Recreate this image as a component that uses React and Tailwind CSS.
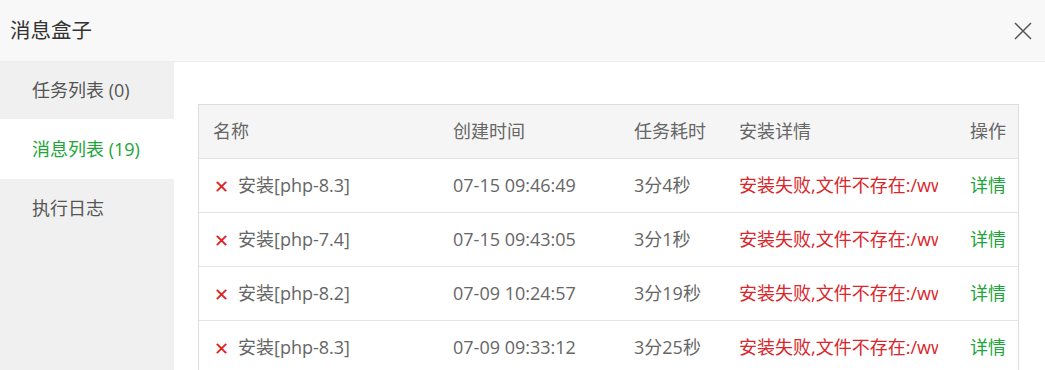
import React from "react";

const rows = [
  { name: "安装[php-8.3]", time: "07-15 09:46:49", cost: "3分4秒" },
  { name: "安装[php-7.4]", time: "07-15 09:43:05", cost: "3分1秒" },
  { name: "安装[php-8.2]", time: "07-09 10:24:57", cost: "3分19秒" },
  { name: "安装[php-8.3]", time: "07-09 09:33:12", cost: "3分25秒" },
];

export default function App() {
  return (
    <div
      className="w-[1045px] h-[370px] overflow-hidden bg-white text-[#666]"
      style={{ fontFamily: '"Open Sans", "Noto Sans CJK SC", sans-serif' }}
    >
      <div className="h-[62px] bg-[#f8f8f8] border-b border-[#eee] flex items-center justify-between pl-[10px] pr-[12px]">
        <span className="text-[20.5px] text-[#333]">消息盒子</span>
        <svg width="20" height="20" viewBox="0 0 20 20" className="text-[#555]">
          <path d="M2 2 L18 18 M18 2 L2 18" stroke="currentColor" strokeWidth="1.5" fill="none" />
        </svg>
      </div>
      <div className="flex h-[308px]">
        <div className="w-[174px] bg-[#f0f0f0] flex flex-col text-[18px]">
          <div className="h-[57px] flex items-center pl-[32px] text-[#555]">任务列表 (0)</div>
          <div className="h-[60px] flex items-center pl-[32px] bg-white text-[#20a53a]">消息列表 (19)</div>
          <div className="h-[59px] flex items-center pl-[32px] text-[#555]">执行日志</div>
        </div>
        <div className="flex-1 pl-[24px] pr-[26px] pt-[42px]">
          <div className="border border-[#ddd] border-b-0 text-[18px]">
            <div className="grid grid-cols-[240px_181px_105px_231px_1fr] h-[54px] items-center bg-[#f5f5f5] border-b border-[#e4e4e4]">
              <div className="pl-[14px]">名称</div>
              <div className="pl-[14px]">创建时间</div>
              <div className="pl-[14px]">任务耗时</div>
              <div className="pl-[14px]">安装详情</div>
              <div className="pr-[12px] text-right">操作</div>
            </div>
            {rows.map((r, i) => (
              <div
                key={i}
                className="grid grid-cols-[240px_181px_105px_231px_1fr] h-[54px] items-center border-b border-[#e4e4e4]"
              >
                <div className="pl-[15px] flex items-center">
                  <span className="text-[#e02020] text-[18px] mr-[9px] leading-none">✕</span>
                  <span>{r.name}</span>
                </div>
                <div className="pl-[14px]">{r.time}</div>
                <div className="pl-[14px]">{r.cost}</div>
                <div className="pl-[14px] pr-[18px]">
                  <div className="overflow-hidden whitespace-nowrap text-[#d9262b]">安装失败,文件不存在:/www/server/php</div>
                </div>
                <div className="pr-[12px] text-right text-[#20a53a]">详情</div>
              </div>
            ))}
          </div>
        </div>
      </div>
    </div>
  );
}
